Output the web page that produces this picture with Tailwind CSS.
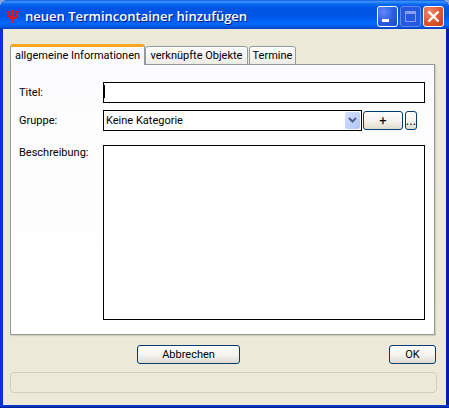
<!DOCTYPE html>
<html lang="de">
<head>
<meta charset="utf-8">
<meta name="viewport" content="width=device-width, initial-scale=1">
<title>neuen Termincontainer hinzufügen</title>
<script src="https://cdn.jsdelivr.net/npm/@tailwindcss/browser@4"></script>
</head>
<body class="bg-[#8ba3dc] font-['Roboto','Noto_Sans',sans-serif] text-[11px] leading-4 text-black">
<div class="flex min-h-screen flex-col rounded-t-lg bg-linear-to-r from-[#0831d9] via-[#0855dd] to-[#001ea0] px-[3px]">
  <header class="-mx-[3px] flex h-[29px] items-center rounded-t-lg bg-[linear-gradient(to_bottom,#0a5be0_0%,#3d95ff_6%,#0a6af5_14%,#0054e3_28%,#0055e5_55%,#0066ff_78%,#0062f5_88%,#0040c0_100%)] pt-[3px] pr-[5px] pl-[7px]">
    <svg class="h-[13px] w-[12px] shrink-0" viewBox="0 0 12 13" fill="#ff0808" shape-rendering="crispEdges" aria-hidden="true">
      <path d="M0 1h3v5h1v1h1V0h2v7h1V6h1V1h3v1h-1v5h-1v1H9v1H7v4H5V9H3V8H2V7H1V2H0z"/>
    </svg>
    <h1 class="ml-[6px] grow font-['Open_Sans',sans-serif] text-[13px] font-semibold whitespace-nowrap text-white [text-shadow:1px_1px_#0a1883]">neuen Termincontainer hinzufügen</h1>
    <div class="flex gap-[2px]">
      <button aria-label="Minimieren" class="size-[21px] rounded-[3px] border border-white bg-radial-[at_30%_25%] from-[#5f8af2] via-[#2c5fe4] to-[#1a46cf]">
        <svg viewBox="0 0 19 19" class="block size-[19px]"><path d="M4 12h7v3H4z" fill="#fff"/></svg>
      </button>
      <button aria-label="Maximieren" disabled class="size-[21px] rounded-[3px] border border-[#6286ea] bg-[#2459de]">
        <svg viewBox="0 0 19 19" class="block size-[19px]"><path d="M4.500 4.500h10v10h-10z" fill="none" stroke="#8b9ff0"/><path d="M4 4h11v3H4z" fill="#8b9ff0"/></svg>
      </button>
      <button aria-label="Schließen" class="size-[21px] rounded-[3px] border border-white bg-radial-[at_30%_25%] from-[#ec8a6c] via-[#e15a34] to-[#c83a12]">
        <svg viewBox="0 0 19 19" class="block size-[19px]"><path d="M4.500 4.500l10 10M14.500 4.500l-10 10" stroke="#fff" stroke-width="2.400"/></svg>
      </button>
    </div>
  </header>

  <main class="flex grow flex-col bg-[#ece9d8] pt-[15px] pr-[10px] pb-3 pl-[7px]">
    <div role="tablist" class="relative -mb-px flex items-end">
      <button role="tab" aria-selected="true" class="h-[21px] w-[135px] rounded-t-[3px] border-x border-t-[3px] border-x-[#919b9c] border-t-[#f5a623] bg-[#fcfcfe] pb-px whitespace-nowrap">allgemeine Informationen</button>
      <button role="tab" aria-selected="false" class="h-[19px] w-[103px] rounded-t-[3px] border border-[#919b9c] bg-linear-to-b from-white to-[#ecebe6] pt-px whitespace-nowrap">verknüpfte Objekte</button>
      <button role="tab" aria-selected="false" class="ml-px h-[19px] w-[47px] rounded-t-[3px] border border-[#919b9c] bg-linear-to-b from-white to-[#ecebe6] pt-px whitespace-nowrap">Termine</button>
    </div>
    <form id="termin" role="tabpanel" class="mr-px grid grow grid-cols-[84px_1fr] grid-rows-[21px_21px_1fr] gap-y-[7px] border border-[#919b9c] bg-linear-to-b from-[#fcfcfe] to-white pt-[17px] pr-[9px] pb-[14px] pl-2 shadow-[1px_1px_1px_#d0cebf]">
      <label for="titel" class="pt-[3px]">Titel:</label>
      <div class="relative">
        <input id="titel" type="text" class="block h-full w-full border border-black bg-white px-[2px] outline-none">
        <span class="absolute top-[3px] left-px h-[13px] w-px bg-black"></span>
      </div>
      <label for="gruppe" class="pt-[3px]">Gruppe:</label>
      <div class="mr-2 flex items-center">
        <div class="relative h-full grow">
          <select id="gruppe" class="block h-full w-full appearance-none border border-black bg-white pl-[2px]"><option>Keine Kategorie</option></select>
          <span class="pointer-events-none absolute top-[2px] right-[2px] grid h-[17px] w-[15px] place-items-center rounded-[2px] bg-linear-to-br from-[#d3e0ff] to-[#b0c5f8]">
            <svg class="h-[7px] w-[9px]" viewBox="0 0 9 7" fill="none" stroke="#4d6185" stroke-width="2"><path d="M1 1l3.500 3.500L8 1"/></svg>
          </span>
        </div>
        <button type="button" aria-label="Gruppe hinzufügen" class="ml-px flex h-[19px] w-10 items-center justify-center rounded-[3px] border border-[#003c74] bg-linear-to-b from-white via-[#f5f4ef] to-[#dedbd0] text-[13px]">+</button>
        <button type="button" aria-label="Gruppe auswählen" class="ml-[2px] flex h-[19px] w-3 items-center justify-center rounded-[3px] border border-[#003c74] bg-linear-to-b from-white via-[#f5f4ef] to-[#dedbd0] text-[13px]">...</button>
      </div>
      <label for="beschreibung" class="pt-[7px]">Beschreibung:</label>
      <textarea id="beschreibung" class="mt-[7px] block resize-none border border-black bg-white p-[2px] outline-none"></textarea>
    </form>
    <div class="mt-[10px] flex justify-between">
      <button type="button" class="ml-[127px] flex h-[19px] w-[103px] items-center justify-center rounded-[3px] border border-[#003c74] bg-linear-to-b from-white via-[#f5f4ef] to-[#dedbd0]">Abbrechen</button>
      <button type="submit" form="termin" class="flex h-[19px] w-[47px] items-center justify-center rounded-[3px] border border-[#003c74] bg-linear-to-b from-white via-[#f5f4ef] to-[#dedbd0]">OK</button>
    </div>
    <div role="status" class="mt-2 -mr-px h-[21px] rounded-[4px] border border-[#d0d0bf]"></div>
  </main>
  <div class="-mx-[3px] h-[3px] bg-linear-to-b from-[#0848dd] to-[#001a90]"></div>
</div>
</body>
</html>
